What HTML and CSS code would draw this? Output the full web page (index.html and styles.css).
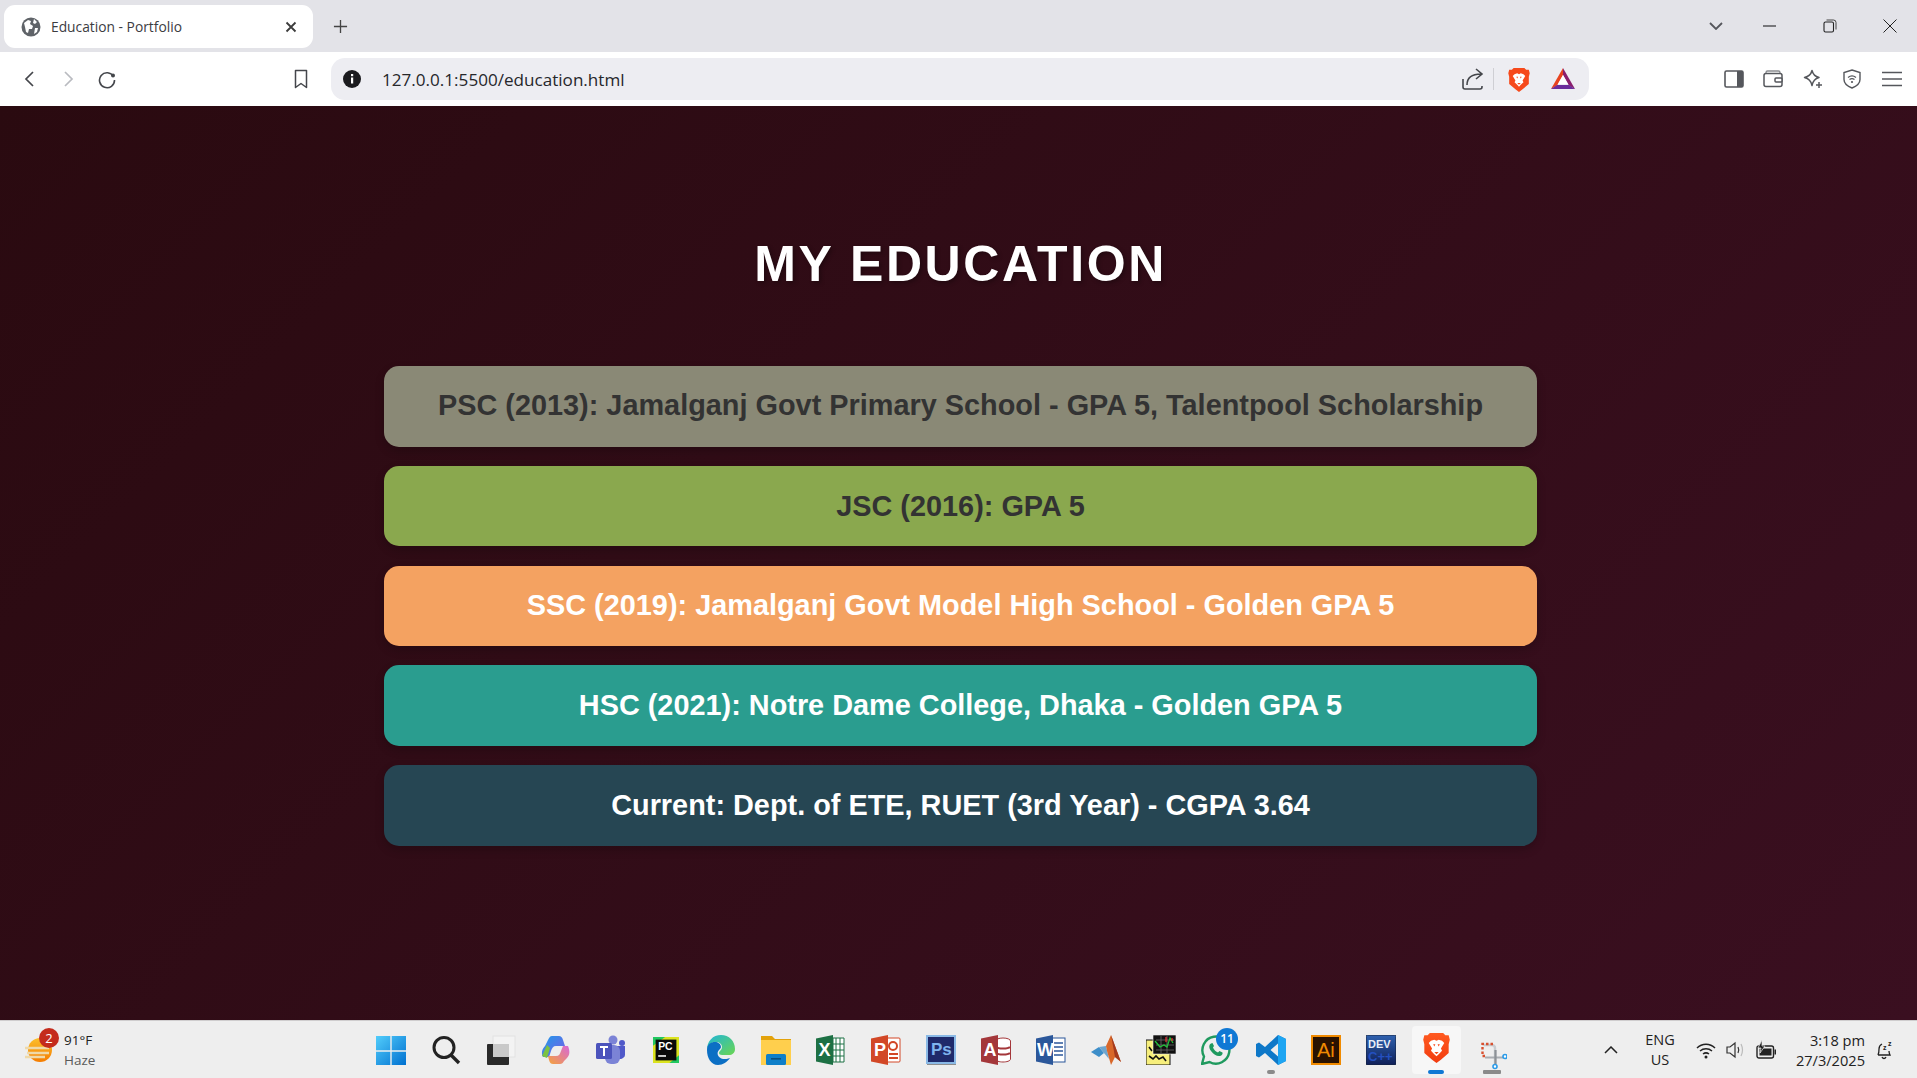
FILE: index.html
```html
<!DOCTYPE html>
<html lang="en">
<head>
    <meta charset="UTF-8">
    <title>Education - Portfolio</title>
    <link rel="stylesheet" href="styles.css">
</head>
<body>
    <!-- browser tabs -->
    <div class="tabstrip">
        <div class="tab">
            <svg class="favicon" viewBox="0 0 20 20"><circle cx="10" cy="10" r="9.500" fill="#5f6368"/><path d="M3 6l4-3 3 1-1 3 3 2-1 3-3 0-1 4-2-1-1-5zM13 2l3 3-2 2-2-1zM14 11l3 0-1 4-3 2z" fill="#fff"/></svg>
            <span class="tab-title">Education - Portfolio</span>
            <svg class="tab-close" viewBox="0 0 12 12"><path d="M1.500 1.500l9 9M10.500 1.500l-9 9" stroke="#3c3c3c" stroke-width="1.800" fill="none"/></svg>
        </div>
        <svg class="new-tab" viewBox="0 0 16 16"><path d="M8 1v14M1 8h14" stroke="#444" stroke-width="1.400" fill="none"/></svg>
        <div class="window-controls">
            <svg class="win-chevron" viewBox="0 0 14 8"><path d="M1 1l6 6 6-6" stroke="#55565c" stroke-width="1.800" fill="none"/></svg>
            <svg class="win-btn" viewBox="0 0 14 14"><path d="M0 7h13" stroke="#222" stroke-width="1.100" fill="none"/></svg>
            <svg class="win-btn" viewBox="0 0 14 14"><rect x="1" y="3" width="9.500" height="10" rx="1.500" stroke="#222" stroke-width="1.100" fill="none"/><path d="M3.500 1h7a2.500 2.500 0 0 1 2.500 2.500v7" stroke="#444" stroke-width="1" fill="none"/></svg>
            <svg class="win-btn" viewBox="0 0 14 14"><path d="M.5.500l13 13M13.500.500l-13 13" stroke="#222" stroke-width="1" fill="none"/></svg>
        </div>
    </div>

    <!-- toolbar + address bar -->
    <div class="toolbar">
        <span class="nav-btn"><svg class="icon-20" viewBox="0 0 20 20"><path d="M13 3l-7 7 7 7" stroke="#44464b" stroke-width="1.700" fill="none"/></svg></span>
        <span class="nav-btn"><svg class="icon-20" viewBox="0 0 20 20"><path d="M7 3l7 7-7 7" stroke="#b9bbc0" stroke-width="1.700" fill="none"/></svg></span>
        <span class="nav-btn"><svg class="icon-20" viewBox="0 0 20 20"><path d="M16.500 7.500A7.500 7.500 0 1 0 17.500 11" stroke="#44464b" stroke-width="1.600" fill="none"/><circle cx="16" cy="6.500" r="2" fill="#44464b"/></svg></span>
        <span class="nav-btn bookmark"><svg class="icon-20" viewBox="0 0 20 20"><path d="M4.500 1.500h11v17l-5.500-4-5.500 4z" stroke="#44464b" stroke-width="1.500" fill="none" stroke-linejoin="round"/></svg></span>
        <div class="address-bar">
            <svg class="icon-20" viewBox="0 0 20 20"><circle cx="10" cy="10" r="9" fill="#1b1b1f"/><rect x="9" y="8.500" width="2.200" height="6" fill="#fff"/><rect x="9" y="5" width="2.200" height="2.200" fill="#fff"/></svg>
            <span class="url">127.0.0.1:5500/education.html</span>
            <svg class="icon-share" viewBox="0 0 22 22"><path d="M1 11v8a2 2 0 0 0 2 2h15a2 2 0 0 0 2-2v-1" stroke="#44464b" stroke-width="1.600" fill="none"/><path d="M5 17c0-7 5-11 14-11M14 1l6 5-6 5" stroke="#44464b" stroke-width="1.600" fill="none"/></svg>
            <span class="addr-sep"></span>
            <svg class="icon-brave" viewBox="0 0 24 28"><path d="M6 1h12l2 2 3 0 1 4-1 4 0 8-7 6-4 3-4-3-7-6 0-8-1-4 1-4 3 0z" fill="#f6491b"/><path d="M7 8l3-1 2 1 2-1 3 1 2 2-3 5 1 2-3 3-2 2-2-2-3-3 1-2-3-5z" fill="#fff"/><path d="M9 11h2l-1 2zM13 11h2l-1 2zM10 18h4l-2 2z" fill="#f6491b"/></svg>
            <svg class="icon-bat" viewBox="0 0 24 22"><path d="M12 0l12 21-6-3.500-6-10.500z" fill="#8a1f6e"/><path d="M12 0L0 21l6-3.500 6-10.500z" fill="#e8431f"/><path d="M0 21h24l-6-4H6z" fill="#6b2d9b"/><path d="M12 7l5 9H7z" fill="#fff"/></svg>
        </div>
        <span class="ext-btn sidebar-btn"><svg class="icon-20" viewBox="0 0 20 20"><rect x="1" y="2" width="18" height="16" rx="1.500" fill="#fff" stroke="#55575c" stroke-width="1.600"/><rect x="13" y="2" width="6" height="16" fill="#55575c"/></svg></span>
        <span class="ext-btn"><svg class="icon-20" viewBox="0 0 20 20"><path d="M3 4V3.500A1.500 1.500 0 0 1 4.500 2h11A1.500 1.500 0 0 1 17 3.500V5" stroke="#8a8c90" stroke-width="1.300" fill="none"/><rect x="1" y="4.500" width="18" height="13" rx="2" stroke="#55575c" stroke-width="1.500" fill="none"/><rect x="12" y="9" width="7" height="4" rx="1" stroke="#55575c" stroke-width="1.500" fill="#fff"/></svg></span>
        <span class="ext-btn"><svg class="icon-20" viewBox="0 0 20 20"><path d="M9 1.500c1 4 3 6 7 7-4 1-6 3-7 8-1-5-3-7-7.500-8C6 7.500 8 5.500 9 1.500z" stroke="#55575c" stroke-width="1.500" fill="none" stroke-linejoin="round"/><path d="M16 13v6M13 16h6" stroke="#55575c" stroke-width="1.500"/></svg></span>
        <span class="ext-btn"><svg class="icon-20" viewBox="0 0 20 20"><path d="M10 1l8 2.500v7c0 4-3 6.500-8 8.500-5-2-8-4.500-8-8.500v-7z" stroke="#55575c" stroke-width="1.400" fill="none"/><path d="M6 8.500c2.500-2 5.500-2 8 0M7.500 10.500c1.500-1 3.500-1 5 0" stroke="#55575c" stroke-width="1.300" fill="none"/><circle cx="10" cy="13" r="1.100" fill="#55575c"/></svg></span>
        <span class="ext-btn"><svg class="icon-20" viewBox="0 0 20 20"><path d="M0 3.500h20M0 10h20M0 16.500h20" stroke="#55575c" stroke-width="1.500"/></svg></span>
    </div>

    <main class="page">
        <h1 class="page-title">MY EDUCATION</h1>
        <div class="edu-list">
            <div class="edu-card psc">PSC (2013): Jamalganj Govt Primary School - GPA 5, Talentpool Scholarship</div>
            <div class="edu-card jsc">JSC (2016): GPA 5</div>
            <div class="edu-card ssc">SSC (2019): Jamalganj Govt Model High School - Golden GPA 5</div>
            <div class="edu-card hsc">HSC (2021): Notre Dame College, Dhaka - Golden GPA 5</div>
            <div class="edu-card current">Current: Dept. of ETE, RUET (3rd Year) - CGPA 3.64</div>
        </div>
    </main>

    <!-- windows taskbar -->
    <footer class="taskbar">
        <div class="weather">
            <div class="weather-icon">
                <svg class="icon-30" viewBox="0 0 30 30"><defs><linearGradient id="sun" x1="0" y1="0" x2="0" y2="1"><stop offset="0" stop-color="#fbc02d"/><stop offset="1" stop-color="#f57c00"/></linearGradient></defs><circle cx="16" cy="15" r="12" fill="url(#sun)"/><path d="M1 13h24M3 18h22M1 22h20" stroke="#efd9a8" stroke-width="2.400"/></svg>
                <span class="weather-badge">2</span>
            </div>
            <div class="weather-text">
                <span class="temp">91°F</span>
                <span class="haze">Haze</span>
            </div>
        </div>

        <div class="apps">
            <span class="app"><svg class="icon-30" viewBox="0 0 30 30"><defs><linearGradient id="win" x1="0" y1="0" x2="1" y2="1"><stop offset="0" stop-color="#52cdfb"/><stop offset="1" stop-color="#0070d0"/></linearGradient></defs><path d="M0 1h14.300v14.300H0zM15.700 1H30v14.300H15.700zM0 16.700h14.300V30H0zM15.700 16.700H30V30H15.700z" fill="url(#win)"/></svg></span>
            <span class="app"><svg class="icon-30" viewBox="0 0 30 30"><circle cx="13" cy="12.500" r="10" stroke="#222" stroke-width="3" fill="none"/><path d="M20 20l8 8" stroke="#222" stroke-width="3.400"/></svg></span>
            <span class="app"><svg class="icon-30" viewBox="0 0 30 30"><rect x="7" y="1" width="22" height="21" fill="#f3f3f3" stroke="#e2e2e2"/><rect x="1" y="9" width="22" height="21" rx="1" fill="#2a2a2a"/><rect x="7" y="9" width="16" height="13" fill="#c9c9c9"/></svg></span>
            <span class="app"><svg class="icon-30" viewBox="0 0 30 30"><defs><linearGradient id="cop1" x1="0" y1="0" x2="1" y2="1"><stop offset="0" stop-color="#1f9be8"/><stop offset="1" stop-color="#7a5be8"/></linearGradient><linearGradient id="cop2" x1="0" y1="1" x2="1" y2="0"><stop offset="0" stop-color="#f4a33a"/><stop offset="1" stop-color="#d868d8"/></linearGradient></defs><path d="M11 1h7c2 0 3 1 4 4l2 6h-9c-3 0-4 2-5 5l-2 6H2C0 18 1 14 4 11l3-6c1-2 2-4 4-4z" fill="url(#cop1)"/><path d="M19 29h-7c-2 0-3-1-4-4l-1-4h8c3 0 4-2 5-5l2-5h5c2 5 2 9-1 12l-3 3c-1 2-2 3-4 3z" fill="url(#cop2)"/><path d="M1 21l5-11 3 3-3 10z" fill="#7cc243"/></svg></span>
            <span class="app"><svg class="icon-30" viewBox="0 0 30 30"><circle cx="17" cy="5" r="4.500" fill="#7b83d6"/><circle cx="26" cy="8" r="3" fill="#5059c9"/><path d="M21 11h8v9a5 5 0 0 1-8 3z" fill="#5059c9"/><rect x="9" y="10" width="15" height="19" rx="6" fill="#7b83d6"/><rect x="0" y="8" width="16" height="16" rx="1.500" fill="#4b53bc"/><path d="M4 12h8M8 12v9" stroke="#fff" stroke-width="2"/></svg></span>
            <span class="app"><svg class="icon-pc" viewBox="0 0 30 30"><rect x="0" y="0" width="30" height="30" fill="#dbe31f"/><path d="M0 0h14L0 10zM30 30H19l11-9z" fill="#21c860"/><rect x="3" y="3" width="24" height="24" fill="#0a0a0a"/><text class="ico-pc" x="6" y="15">PC</text><rect x="6" y="21" width="9" height="1.800" fill="#fff"/></svg></span>
            <span class="app"><svg class="icon-30" viewBox="0 0 30 30"><defs><linearGradient id="edge1" x1="0" y1="0" x2="1" y2="1"><stop offset="0" stop-color="#1fb5d8"/><stop offset="1" stop-color="#6bd651"/></linearGradient></defs><path d="M1 15C1 6 7 0 15 0c8 0 14 6 14 14 0 4-3 6-6 6h-7c-2 0-3-1-3-2 0-2 3-3 3-6 0-3-3-5-6-5-5 0-8 3-9 8z" fill="url(#edge1)"/><path d="M1 15c0-6 4-8 8-8 3 0 6 2 6 5 0 1-1 2-2 3-3 3-1 8 4 9 2 0 5 0 7-1-3 4-7 7-12 7-7 0-11-7-11-15z" fill="#0c6fc4"/></svg></span>
            <span class="app"><svg class="icon-30" viewBox="0 0 30 30"><path d="M0 1h11l3 3h16v5H0z" fill="#e3a20b"/><rect x="0" y="5" width="30" height="25" fill="#ffcf4d"/><rect x="5" y="19" width="20" height="11" rx="1.500" fill="#0f7fc9"/><rect x="10" y="23" width="10" height="1.600" fill="#0a4f80"/></svg></span>
            <span class="app"><svg class="icon-30" viewBox="0 0 30 30"><path d="M17 3h11v24H17z" fill="#fff" stroke="#1d7044" stroke-width="1"/><path d="M20 3v24M24 3v24M17 9h11M17 15h11M17 21h11" stroke="#1d7044" stroke-width="1"/><path d="M0 3.500L17 0v30L0 26.500z" fill="#1d7044"/><text class="ico-letter" x="2.500" y="21">X</text></svg></span>
            <span class="app"><svg class="icon-30" viewBox="0 0 30 30"><path d="M15 3h13a1 1 0 0 1 1 1v22a1 1 0 0 1-1 1H15z" fill="#fff" stroke="#d24726"/><circle cx="22" cy="11" r="4" fill="none" stroke="#d24726" stroke-width="2"/><path d="M18 19h9M18 23h9" stroke="#d24726" stroke-width="2"/><path d="M0 3.500L17 0v30L0 26.500z" fill="#d24726"/><text class="ico-letter" x="3" y="21">P</text></svg></span>
            <span class="app"><svg class="icon-30" viewBox="0 0 30 30"><rect x="1" y="1" width="28" height="27" fill="#1f2a6b" stroke="#8ab9e6" stroke-width="2"/><rect x="1" y="29" width="29" height="1" fill="#8e8e8e"/><text class="ico-ps" x="5" y="20">Ps</text></svg></span>
            <span class="app"><svg class="icon-30" viewBox="0 0 30 30"><ellipse cx="22" cy="6" rx="7.500" ry="3" fill="#fff" stroke="#a4373a"/><path d="M14.500 6v18c0 2 4 3 7.500 3s7.500-1 7.500-3V6" fill="#fff" stroke="#a4373a"/><path d="M15 12c2 2 12 2 14 0M15 18c2 2 12 2 14 0" stroke="#a4373a" stroke-width="2" fill="none"/><path d="M0 3.500L17 0v30L0 26.500z" fill="#a4373a"/><text class="ico-letter" x="2.500" y="21">A</text></svg></span>
            <span class="app"><svg class="icon-30" viewBox="0 0 30 30"><rect x="16" y="3" width="13" height="24" fill="#fff" stroke="#2b579a"/><path d="M18 8h9M18 12h9M18 16h9M18 20h9" stroke="#2b579a" stroke-width="1.500"/><path d="M0 3.500L17 0v30L0 26.500z" fill="#2b579a"/><text class="ico-letter" x="1" y="21">W</text></svg></span>
            <span class="app"><svg class="icon-30" viewBox="0 0 30 30"><path d="M0 17l8-5 5 6-5 4z" fill="#3d8ec9"/><path d="M8 12l7-1 3 13-5-6z" fill="#6ea6cf"/><path d="M15 11l5-11 10 27-6-5-4 8-4-14z" fill="#d9682a"/><path d="M20 0l4 22 6 5z" fill="#a33a1f"/></svg></span>
            <span class="app"><svg class="icon-30" viewBox="0 0 30 30"><rect x="0" y="5" width="24" height="25" fill="#f7ef7c" stroke="#111"/><path d="M3 21l4 3 3-3 3 3 4-2 3 4M3 12l3 4" stroke="#111" stroke-width="1.600" fill="none"/><rect x="7" y="0" width="23" height="19" fill="#111" stroke="#eee" stroke-width=".6"/><path d="M10 5h18M10 10h18M10 15h18M15 1v17M21 1v17" stroke="#777" stroke-width=".7"/><path d="M9 6l5 6 4-2 3 2 3-9 3 5" stroke="#22c53a" stroke-width="1.200" fill="none"/><path d="M20 2v5M26 3v3" stroke="#e33" stroke-width="1.200"/></svg></span>
            <span class="app">
                <svg class="icon-30" viewBox="0 0 30 30"><path d="M1 29l2-7.500A13.500 13.500 0 1 1 8.500 27z" fill="none" stroke="#1f9a5e" stroke-width="2.400"/><path d="M10 8.500c-2 1-2.500 4 0 7.500 3 4 6 5.500 9 5 2-.5 3-2.500 2.500-3.500l-3-1.500-1.500 1.500c-2-.5-4-2.500-5-5L13 11l-1.500-3z" fill="#1f9a5e"/></svg>
                <span class="app-badge">11</span>
            </span>
            <span class="app running"><svg class="icon-30" viewBox="0 0 30 30"><path d="M22 0l8 4v22l-8 4-13-12-6 4.500L0 21V9l3-1.500L9 12zM22 8.500L14.500 15 22 21.500z" fill="#0e78c8"/><path d="M22 0l8 4v22l-8 4z" fill="#1ea5f2"/></svg></span>
            <span class="app"><svg class="icon-30" viewBox="0 0 30 30"><rect x="1" y="1" width="28" height="28" fill="#2a1200" stroke="#f08a00" stroke-width="2"/><text class="ico-ai" x="6" y="22">Ai</text></svg></span>
            <span class="app"><svg class="icon-30" viewBox="0 0 30 30"><defs><linearGradient id="dev" x1="0" y1="0" x2="0" y2="1"><stop offset="0" stop-color="#2f62b0"/><stop offset="1" stop-color="#0f1f58"/></linearGradient></defs><rect x="0" y="0" width="30" height="30" rx="1.500" fill="url(#dev)" stroke="#16243f"/><text class="ico-dev" x="2" y="13">DEV</text><text class="ico-cpp" x="2" y="26">C++</text></svg></span>
            <span class="app active">
                <svg class="icon-brave-task" viewBox="0 0 24 28"><defs><linearGradient id="brave" x1="0" y1="0" x2="0" y2="1"><stop offset="0" stop-color="#ff5a20"/><stop offset="1" stop-color="#f23c10"/></linearGradient></defs><path d="M6 1h12l2 2 3 0 1 4-1 4 0 8-7 6-4 3-4-3-7-6 0-8-1-4 1-4 3 0z" fill="url(#brave)"/><path d="M7 8l3-1 2 1 2-1 3 1 2 2-3 5 1 2-3 3-2 2-2-2-3-3 1-2-3-5z" fill="#fff"/><path d="M9 11h2l-1 2zM13 11h2l-1 2zM10 18h4l-2 2z" fill="#f6491b"/></svg>
            </span>
            <span class="app snip"><svg class="icon-snip" viewBox="0 0 30 30"><path d="M7 3h8a3 3 0 0 1 3 3v16" stroke="#c8ccd0" stroke-width="2.400" fill="none"/><path d="M16 2H5.500v12h3" stroke="#d8502f" stroke-width="2.400" stroke-dasharray="2.500 2" fill="none"/><path d="M8 15.500h18" stroke="#a9adb2" stroke-width="2"/><path d="M18.500 8v14" stroke="#8d9196" stroke-width="2.200"/><circle cx="28" cy="14.500" r="2" fill="#fff" stroke="#2b9be8" stroke-width="1.600"/><circle cx="18" cy="24.500" r="2" fill="#fff" stroke="#2b9be8" stroke-width="1.600"/></svg></span>
        </div>

        <div class="tray">
            <svg class="tray-chevron" viewBox="0 0 14 8"><path d="M1 7l6-6 6 6" stroke="#222" stroke-width="1.500" fill="none"/></svg>
            <div class="lang"><span>ENG</span><span>US</span></div>
            <svg class="tray-icon" viewBox="0 0 20 20"><path d="M1 8c5-5 13-5 18 0M4 11c3.500-3 8.500-3 12 0M7 14c2-1.500 4-1.500 6 0" stroke="#222" stroke-width="1.500" fill="none"/><circle cx="10" cy="17" r="1.500" fill="#222"/></svg>
            <svg class="tray-icon" viewBox="0 0 20 20"><path d="M1 7h3l5-4v14l-5-4H1z" stroke="#333" stroke-width="1.200" fill="none"/><path d="M12 7c1 2 1 4 0 6" stroke="#333" stroke-width="1.200" fill="none"/><path d="M15 4c2 4 2 8 0 12" stroke="#bbb" stroke-width="1.200" fill="none"/></svg>
            <svg class="tray-icon" viewBox="0 0 20 20"><rect x="1" y="6" width="16.500" height="12" rx="2" fill="#eee" stroke="#222" stroke-width="1.400"/><rect x="3.500" y="8.500" width="12" height="7" fill="#222"/><rect x="18.500" y="9.500" width="1.500" height="5" fill="#222"/><path d="M6 0L2 8h3l-1 5 5-7H6z" fill="#222" stroke="#eee" stroke-width=".7"/></svg>
            <div class="clock"><span>3:18 pm</span><span>27/3/2025</span></div>
            <svg class="tray-bell" viewBox="0 0 20 20"><path d="M4 15c1-2 1-3 1-6 0-2 1-4 3-5M4 15h12c-1-2-1-2-1-4M8 17c1 2 3 2 4 0" stroke="#222" stroke-width="1.300" fill="none"/><text class="ico-z" x="9" y="10">z</text><text class="ico-z" x="14" y="6">z</text></svg>
        </div>
    </footer>
</body>
</html>
```

FILE: styles.css
```css
* {
    box-sizing: border-box;
}

html, body {
    height: 100%;
}

body {
    margin: 0;
    display: flex;
    flex-direction: column;
    height: 1078px;
    overflow: hidden;
    font-family: 'Liberation Sans', Arial, sans-serif;
}

svg {
    display: block;
    flex-shrink: 0;
}

.icon-20 {
    width: 20px;
    height: 20px;
}

.icon-30 {
    width: 30px;
    height: 30px;
}

/* tab strip */
.tabstrip {
    height: 52px;
    flex-shrink: 0;
    display: flex;
    align-items: flex-start;
    padding: 5px 0 0 4px;
    background: #e3e3e8;
}

.tab {
    width: 309px;
    height: 43px;
    display: flex;
    align-items: center;
    padding: 0 16px 0 17px;
    background: #fff;
    border-radius: 11px;
}

.favicon {
    width: 20px;
    height: 20px;
}

.tab-title {
    flex: 1;
    margin-left: 10px;
    font-family: 'Open Sans', sans-serif;
    font-size: 13.8px;
    color: #3c3c3f;
}

.tab-close {
    width: 12px;
    height: 12px;
}

.new-tab {
    width: 15px;
    height: 15px;
    margin: 14px 0 0 20px;
}

.window-controls {
    margin-left: auto;
    display: flex;
    align-items: center;
    height: 42px;
    padding-right: 20px;
}

.win-chevron {
    width: 14px;
    height: 8px;
    margin-right: 40px;
}

.win-btn {
    width: 14px;
    height: 14px;
    margin-left: 46px;
}

.win-chevron + .win-btn {
    margin-left: 0;
}

/* toolbar */
.toolbar {
    height: 54px;
    flex-shrink: 0;
    display: flex;
    align-items: center;
    padding-left: 10px;
    background: #fff;
}

.nav-btn {
    width: 39px;
    height: 40px;
    display: flex;
    align-items: center;
    justify-content: center;
}

.nav-btn:nth-child(2) {
    margin-left: -1px;
}

.ext-btn {
    width: 39.5px;
    height: 40px;
    display: flex;
    align-items: center;
    justify-content: center;
}

.bookmark {
    margin-left: 155px;
}

.sidebar-btn {
    margin-left: 125px;
}

.address-bar {
    width: 1258px;
    height: 42px;
    margin-left: 11px;
    display: flex;
    align-items: center;
    padding: 0 14px 0 11px;
    background: #ededf2;
    border-radius: 14px;
}

.url {
    margin-left: 20px;
    font-family: 'Open Sans', sans-serif;
    font-size: 17.1px;
    color: #26272b;
}

.icon-share {
    width: 22px;
    height: 22px;
    margin-left: auto;
}

.addr-sep {
    width: 1px;
    height: 22px;
    margin: 0 14px 0 9px;
    background: #cfcfd4;
}

.icon-brave {
    width: 22px;
    height: 25px;
}

.icon-bat {
    width: 24px;
    height: 22px;
    margin-left: 21px;
}

/* page */
.page {
    flex: 1;
    display: flex;
    flex-direction: column;
    align-items: center;
    padding: 130px 0 0 4px;
    background: linear-gradient(135deg, #2a0a10, #3a0f20);
}

.page-title {
    margin: 0 0 74px;
    font-size: 50px;
    line-height: 56px;
    font-weight: 700;
    letter-spacing: 2.6px;
    color: #fff;
    text-shadow: 2px 2px 4px rgba(0, 0, 0, 0.3);
}

.edu-list {
    width: 1153px;
    display: flex;
    flex-direction: column;
    gap: 19.25px;
}

.edu-card {
    height: 80.5px;
    display: flex;
    align-items: center;
    justify-content: center;
    border-radius: 15px;
    font-size: 28.87px;
    font-weight: 700;
    box-shadow: 0 4px 10px rgba(0, 0, 0, 0.2);
}

.psc {
    padding-bottom: 1px;
    background: #8a8976;
    color: #333;
}

.jsc {
    background: #8aa84e;
    color: #333;
}

.ssc {
    background: #f4a261;
    color: #fff;
}

.hsc {
    background: #2a9d8f;
    color: #fff;
}

.current {
    background: #264653;
    color: #fff;
}

/* taskbar */
.taskbar {
    height: 58px;
    flex-shrink: 0;
    display: flex;
    align-items: center;
    background: #eeeeee;
    border-top: 1px solid #cfcdce;
    font-family: 'Open Sans', sans-serif;
    color: #222;
}

.weather {
    width: 363px;
    display: flex;
    align-items: center;
    padding-left: 24px;
}

.weather-icon {
    position: relative;
    width: 30px;
    height: 30px;
}

.weather-badge {
    position: absolute;
    top: -7px;
    right: -5px;
    width: 20px;
    height: 20px;
    border-radius: 50%;
    background: #c42b1c;
    color: #fff;
    font-size: 13px;
    line-height: 20px;
    text-align: center;
}

.weather-text {
    display: flex;
    flex-direction: column;
    margin-left: 10px;
    font-size: 13.5px;
    line-height: 20px;
}

.haze {
    color: #5a5a5a;
}

.apps {
    display: flex;
    height: 100%;
}

.app {
    position: relative;
    width: 55px;
    height: 100%;
    display: flex;
    align-items: center;
    justify-content: center;
}

.app.running::after {
    content: "";
    position: absolute;
    left: 24px;
    bottom: 4px;
    width: 8px;
    height: 4px;
    border-radius: 2px;
    background: #8a8a8a;
}

.app.snip::after {
    content: "";
    position: absolute;
    left: 20px;
    bottom: 4px;
    width: 18px;
    height: 4px;
    border-radius: 1px;
    background: #8a8a8a;
}

.icon-snip {
    width: 30px;
    height: 30px;
    margin: 14px 0 0 3px;
}

.app.active {
    background: #f7f7f7;
    border-radius: 4px;
    margin: 5px 2px 4px 4px;
    width: 49px;
    height: auto;
}

.app.active::after {
    content: "";
    position: absolute;
    left: 16px;
    bottom: 0;
    width: 16px;
    height: 4px;
    border-radius: 2px;
    background: #0f78d4;
}

.icon-brave-task {
    width: 27px;
    height: 31px;
    margin-bottom: 5px;
}

.app-badge {
    position: absolute;
    top: 7px;
    left: 28px;
    width: 22px;
    height: 22px;
    border-radius: 50%;
    background: #0f78d4;
    color: #fff;
    font-size: 12px;
    font-weight: 600;
    line-height: 22px;
    text-align: center;
}

.icon-pc {
    width: 26px;
    height: 26px;
}

/* small labels inside the app icons */
.ico-pc {
    font: 700 12px 'Liberation Sans', sans-serif;
    fill: #fff;
}

.ico-letter {
    font: 700 18px 'Liberation Sans', sans-serif;
    fill: #fff;
}

.ico-ps {
    font: 700 17px 'Liberation Sans', sans-serif;
    fill: #7fb4ee;
}

.ico-ai {
    font: 400 20px 'Liberation Sans', sans-serif;
    fill: #f08a00;
}

.ico-dev {
    font: 700 11px 'Liberation Sans', sans-serif;
    fill: #e8eef8;
}

.ico-cpp {
    font: 700 13px 'Liberation Sans', sans-serif;
    fill: #2450c0;
}

.ico-z {
    font: 700 7px 'Liberation Sans', sans-serif;
    fill: #222;
}

/* tray */
.tray {
    flex: 1;
    display: flex;
    align-items: center;
}

.tray-chevron {
    width: 14px;
    height: 8px;
    margin-left: 86px;
}

.lang {
    display: flex;
    flex-direction: column;
    align-items: center;
    width: 40px;
    margin-left: 22px;
    font-size: 14.5px;
    line-height: 20px;
}

.tray-icon {
    width: 20px;
    height: 20px;
}

.lang + .tray-icon {
    margin-left: 16px;
}

.tray-icon + .tray-icon {
    margin-left: 10px;
}

.clock {
    display: flex;
    flex-direction: column;
    align-items: flex-end;
    width: 78px;
    margin-left: 11px;
    font-size: 14.6px;
    line-height: 20px;
}

.tray-bell {
    width: 20px;
    height: 20px;
    margin-left: 9px;
}
```
